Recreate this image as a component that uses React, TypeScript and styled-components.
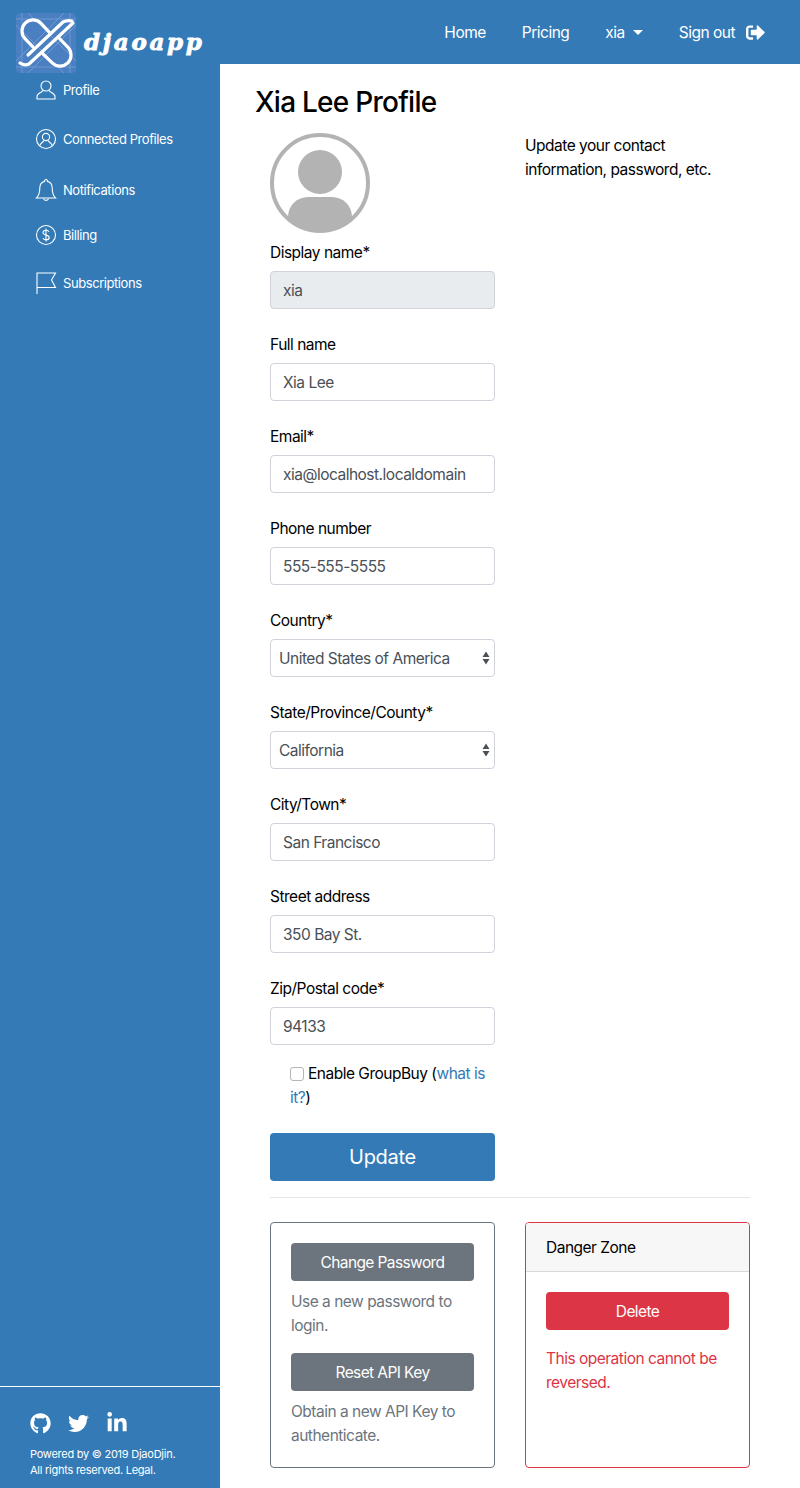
import * as React from 'react';
import styled, { createGlobalStyle } from 'styled-components';
import { FaGithub, FaLinkedinIn, FaSignOutAlt, FaTwitter } from 'react-icons/fa';

const GlobalStyle = createGlobalStyle`
    html, body {
        margin: 0;
        padding: 0;
        background: #fff;
    }
    * {
        box-sizing: border-box;
    }
    body {
        font-family: Inter, "Liberation Sans", sans-serif;
        font-size: 15.5px;
        line-height: 24px;
        letter-spacing: -0.5px;
        color: #000;
    }
`;

const Page = styled.div`
    width: 800px;
    min-height: 1488px;
    display: flex;
    flex-direction: column;
`;

const Header = styled.header`
    position: relative;
    height: 64px;
    background: #337ab7;
    display: flex;
    align-items: center;
    justify-content: flex-end;
    padding-right: 35px;
    gap: 36px;
    color: #fff;
`;

const Brand = styled.a`
    position: absolute;
    left: 16px;
    top: 13px;
    display: flex;
    align-items: center;
    gap: 8px;
    z-index: 2;
`;

const BrandName = styled.span`
    font-family: "DejaVu Serif", serif;
    font-style: italic;
    font-weight: 700;
    font-size: 23px;
    line-height: 24px;
    letter-spacing: 2.7px;
    -webkit-text-stroke: 0.8px #fff;
    color: #fff;
    margin-top: -2px;
`;

const NavLink = styled.a`
    display: flex;
    align-items: center;
    height: 26px;
    padding-top: 1px;
    color: #fff;
    svg {
        margin-left: 11px;
    }
`;

const Caret = styled.span`
    width: 0;
    height: 0;
    margin-left: 8px;
    border-top: 5px solid #fff;
    border-left: 5px solid transparent;
    border-right: 5px solid transparent;
`;

const Body = styled.div`
    flex: 1;
    display: flex;
`;

const Sidebar = styled.aside`
    width: 220px;
    flex: none;
    background: #337ab7;
    color: #fff;
    display: flex;
    flex-direction: column;
    padding-top: 14px;
`;

const SideItem = styled.a<{ $gap: number }>`
    height: 24px;
    margin-top: ${p => p.$gap}px;
    padding-left: 36px;
    display: flex;
    align-items: center;
    gap: 7px;
    font-size: 13px;
    letter-spacing: -0.43px;
    color: #fff;
    svg {
        flex: none;
        overflow: visible;
    }
`;

const SideFooter = styled.div`
    margin-top: auto;
    border-top: 1px solid #fff;
    padding: 25px 0 10px 30px;
    font-size: 11px;
    line-height: 16px;
    letter-spacing: -0.25px;
`;

const Socials = styled.div`
    display: flex;
    align-items: center;
    gap: 17px;
    height: 22px;
    margin-bottom: 12px;
`;

const Main = styled.main`
    flex: 1;
    padding: 20px 50px 20px 50px;
`;

const Title = styled.h1`
    margin: 0 0 13px -15px;
    font-size: 28px;
    line-height: 36px;
    font-weight: 500;
    letter-spacing: -0.75px;
`;

const Columns = styled.div`
    display: grid;
    grid-template-columns: 225px 225px;
    column-gap: 30px;
`;

const Avatar = styled.svg`
    display: block;
    margin-bottom: 6px;
`;

const Field = styled.div`
    margin-bottom: 22px;
`;

const Label = styled.label`
    display: block;
    padding-top: 2px;
    margin-bottom: 6px;
`;

const Input = styled.input`
    display: block;
    width: 100%;
    height: 38px;
    padding: 0 12px;
    border: 1px solid #ced4da;
    border-radius: 4px;
    font: inherit;
    letter-spacing: inherit;
    color: #495057;
    background: #fff;
    &:disabled {
        background: #e9ecef;
        opacity: 1;
    }
`;

const SelectWrap = styled.div`
    position: relative;
    svg {
        position: absolute;
        right: 5px;
        top: 12px;
    }
`;

const Select = styled.select`
    display: block;
    width: 100%;
    height: 38px;
    padding: 1px 8px 0;
    border: 1px solid #ced4da;
    border-radius: 4px;
    font: inherit;
    letter-spacing: inherit;
    color: #495057;
    background: #fff;
    appearance: none;
`;

const CheckRow = styled.label`
    display: block;
    margin: -5px 0 23px 20px;
    a {
        color: #337ab7;
    }
`;

const Check = styled.input`
    appearance: none;
    width: 14px;
    height: 14px;
    margin: 0 4px 0 0;
    vertical-align: -2px;
    background: #fff;
    border: 1px solid #b5b5b5;
    border-radius: 3px;
`;

const Button = styled.button<{ $bg: string; $large?: boolean }>`
    display: block;
    width: 100%;
    height: ${p => p.$large ? 48 : 38}px;
    border: 0;
    border-radius: 4px;
    background: ${p => p.$bg};
    color: #fff;
    font-family: inherit;
    font-size: ${p => p.$large ? 20 : 15.5}px;
    letter-spacing: ${p => p.$large ? -0.3 : -0.6}px;
`;

const Help = styled.p`
    margin: 0;
    padding-top: 1px;
`;

const Divider = styled.hr`
    margin: 16px 0 24px;
    border: 0;
    border-top: 1px solid rgba(0, 0, 0, 0.1);
`;

const Card = styled.section<{ $color: string }>`
    height: 246px;
    border: 1px solid ${p => p.$color};
    border-radius: 4px;
    color: ${p => p.$color};
    overflow: hidden;
`;

const CardBody = styled.div`
    padding: 20px;
`;

const CardHeader = styled.div`
    height: 49px;
    padding: 13px 20px 0;
    background: #f7f7f7;
    border-bottom: 1px solid rgba(0, 0, 0, 0.125);
    color: #000;
`;

const CardText = styled.p<{ $top: number }>`
    margin: ${p => p.$top}px 0 15px;
`;

const Logo = () => (
    <svg width="60" height="60" viewBox="0 0 60 60" fill="none">
        <rect width="60" height="60" rx="4" fill="#4a7fc1" />
        <g stroke="#7fa4d6" strokeWidth="1" opacity="0.7">
            <path d="M0 12L48 60M12 0L60 48M0 48L48 0M12 60L60 12M0 6H60M0 54H60M6 0V60M54 0V60" />
        </g>
        <g stroke="#fff" strokeWidth="3.2" strokeLinecap="round" strokeLinejoin="round">
            <path d="M4 50Q8 53 13 51L57 10" />
            <path d="M12 42L47 9Q51 7 56 8" />
            <path d="M17 34L9.2 25.8A11 11 0 0 1 24.8 10.2L34 20" />
            <path d="M43 25L51.8 34.2A11 11 0 0 1 36.2 49.8L26 40" />
        </g>
    </svg>
);

const lineIcon = {
    fill: 'none',
    stroke: '#fff',
    strokeWidth: 1.1,
};

const ProfileIcon = () => (
    <svg width="20" height="20" viewBox="0 0 20 20" {...lineIcon}>
        <circle cx="10" cy="6" r="5" />
        <path d="M7 10.5C6 12.5 1 13 1 16.5V19H19V16.5C19 13 14 12.5 13 10.5" />
    </svg>
);

const ConnectedIcon = () => (
    <svg width="20" height="20" viewBox="0 0 20 20" {...lineIcon}>
        <circle cx="10" cy="10" r="9.5" />
        <circle cx="10" cy="8" r="3.6" />
        <path d="M3.6 17C4.2 14 7 13.5 8 11.5M16.4 17C15.8 14 13 13.5 12 11.5" />
    </svg>
);

const BellIcon = () => (
    <svg width="20" height="24" viewBox="0 0 20 24" {...lineIcon}>
        <path d="M10 1.5C11 1.5 11.5 2.2 11.4 3.4C14.6 4.2 16.2 6.8 16.2 10C16.2 15 17 17.5 19.5 20H0.5C3 17.5 3.8 15 3.8 10C3.8 6.8 5.4 4.2 8.6 3.4C8.5 2.2 9 1.5 10 1.5Z" />
        <path d="M7.5 20.5C7.8 23 12.2 23 12.5 20.5" />
    </svg>
);

const BillingIcon = () => (
    <svg width="20" height="20" viewBox="0 0 20 20" {...lineIcon}>
        <circle cx="10" cy="10" r="9.5" />
        <path d="M13 6.8C12.4 5.6 11.2 5.2 10 5.2C8.2 5.2 7 6.1 7 7.6C7 11 13.2 9.2 13.2 12.6C13.2 14 11.9 14.9 10 14.9C8.6 14.9 7.4 14.3 6.9 13.1M10 3.6V16.4" />
    </svg>
);

const FlagIcon = () => (
    <svg width="20" height="22" viewBox="0 0 20 22" {...lineIcon}>
        <path d="M1 22V1H19.5L15.5 8L19.5 15.5H1" />
    </svg>
);

const SpinnerArrows = () => (
    <svg width="8" height="14" viewBox="0 0 8 14" fill="#4b5157">
        <path d="M4 0.5L7.5 6H0.5ZM4 13.5L0.5 8H7.5Z" />
    </svg>
);

const fields: { label: string; value: string; disabled?: boolean; options?: boolean }[] = [
    { label: 'Display name*', value: 'xia', disabled: true },
    { label: 'Full name', value: 'Xia Lee' },
    { label: 'Email*', value: 'xia@localhost.localdomain' },
    { label: 'Phone number', value: '555-555-5555' },
    { label: 'Country*', value: 'United States of America', options: true },
    { label: 'State/Province/County*', value: 'California', options: true },
    { label: 'City/Town*', value: 'San Francisco' },
    { label: 'Street address', value: '350 Bay St.' },
    { label: 'Zip/Postal code*', value: '94133' },
];

export default function App() {
    return (
        <Page>
            <GlobalStyle />
            <Header>
                <Brand>
                    <Logo />
                    <BrandName>djaoapp</BrandName>
                </Brand>
                <NavLink>Home</NavLink>
                <NavLink>Pricing</NavLink>
                <NavLink>xia<Caret /></NavLink>
                <NavLink>Sign out<FaSignOutAlt size={19} /></NavLink>
            </Header>
            <Body>
                <Sidebar>
                    <SideItem $gap={0}><ProfileIcon />Profile</SideItem>
                    <SideItem $gap={25}><ConnectedIcon />Connected Profiles</SideItem>
                    <SideItem $gap={27}><BellIcon />Notifications</SideItem>
                    <SideItem $gap={21}><BillingIcon />Billing</SideItem>
                    <SideItem $gap={24}><FlagIcon />Subscriptions</SideItem>
                    <SideFooter>
                        <Socials>
                            <FaGithub size={21} />
                            <FaTwitter size={21} />
                            <FaLinkedinIn size={22} />
                        </Socials>
                        Powered by © 2019 DjaoDjin.<br />
                        All rights reserved. Legal.
                    </SideFooter>
                </Sidebar>
                <Main>
                    <Title>Xia Lee Profile</Title>
                    <Columns>
                        <div>
                            <Avatar width="100" height="100" viewBox="0 0 100 100">
                                <defs>
                                    <clipPath id="avatar-clip">
                                        <circle cx="50" cy="50" r="48" />
                                    </clipPath>
                                </defs>
                                <circle cx="50" cy="50" r="48" fill="none" stroke="#b3b3b3" strokeWidth="4" />
                                <circle cx="50" cy="39" r="22" fill="#b3b3b3" />
                                <rect x="18" y="64" width="64" height="50" rx="20" fill="#b3b3b3" clipPath="url(#avatar-clip)" />
                            </Avatar>
                            {fields.map(f => (
                                <Field key={f.label}>
                                    <Label>{f.label}</Label>
                                    {f.options ? (
                                        <SelectWrap>
                                            <Select defaultValue={f.value}>
                                                <option>{f.value}</option>
                                            </Select>
                                            <SpinnerArrows />
                                        </SelectWrap>
                                    ) : (
                                        <Input defaultValue={f.value} disabled={f.disabled} />
                                    )}
                                </Field>
                            ))}
                            <CheckRow>
                                <Check type="checkbox" />Enable GroupBuy (<a>what is it?</a>)
                            </CheckRow>
                            <Button $bg="#337ab7" $large>Update</Button>
                        </div>
                        <Help>Update your contact information, password, etc.</Help>
                    </Columns>
                    <Divider />
                    <Columns>
                        <Card $color="#6c757d">
                            <CardBody>
                                <Button $bg="#6c757d">Change Password</Button>
                                <CardText $top={9}>Use a new password to login.</CardText>
                                <Button $bg="#6c757d">Reset API Key</Button>
                                <CardText $top={9}>Obtain a new API Key to authenticate.</CardText>
                            </CardBody>
                        </Card>
                        <Card $color="#dc3545">
                            <CardHeader>Danger Zone</CardHeader>
                            <CardBody>
                                <Button $bg="#dc3545">Delete</Button>
                                <CardText $top={17}>This operation cannot be reversed.</CardText>
                            </CardBody>
                        </Card>
                    </Columns>
                </Main>
            </Body>
        </Page>
    );
}
